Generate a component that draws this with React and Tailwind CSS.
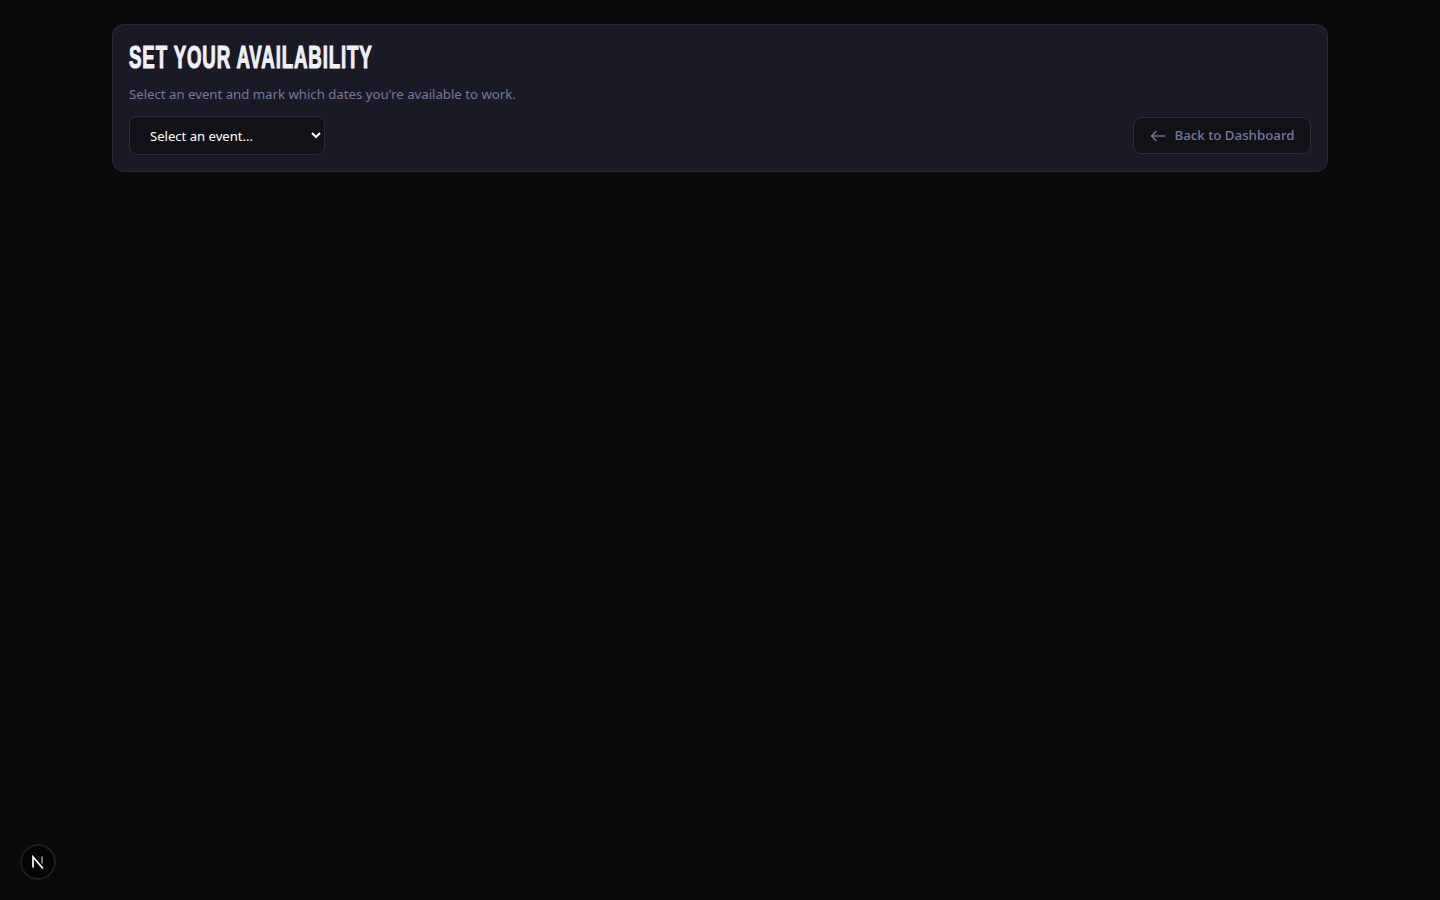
import React from "react";

const sans = "font-['Noto_Sans','Open_Sans',sans-serif]";

// Next.js dev indicator in the bottom corner
const DevBadge = () => (
  <div className="fixed left-5 bottom-5 w-9 h-9 rounded-full bg-[#050505] border-2 border-[#1e1e1e] flex items-center justify-center">
    <svg width="16" height="16" viewBox="0 0 16 16" fill="none">
      <path d="M3 13.5V3L13 14.5" stroke="#fff" strokeWidth="1.7" />
      <path d="M12 2.5V9.5" stroke="#aaa" strokeWidth="1.4" />
    </svg>
  </div>
);

const ArrowBack = () => (
  <svg width="16" height="16" viewBox="0 0 16 16" fill="none" stroke="#76768f" strokeWidth="1.4">
    <path d="M15 8H1.5" />
    <path d="M6.5 3L1.5 8L6.5 13" />
  </svg>
);

export default function App() {
  return (
    <div className={`min-h-screen bg-[#0a0a0c] ${sans}`}>
      <div className="w-[1216px] mx-auto pt-6">
        <div className="h-[148px] rounded-xl bg-[#1a1a26] border border-[#2a2a3a] px-4 pt-4 pb-4">
          <h1 className="h-[33px] font-['Liberation_Sans',sans-serif] font-bold text-[32px] leading-[33px] tracking-[1.5px] text-[#f0f0f8] uppercase whitespace-nowrap origin-left scale-x-[0.583] [-webkit-text-stroke:1.2px_#f0f0f8]">
            Set Your Availability
          </h1>
          <p className="mt-[10px] text-[13.2px] leading-5 text-[#77779b]">
            Select an event and mark which dates you're available to work.
          </p>
          <div className="mt-[12px] flex items-center justify-between">
            <select className={`w-[196px] h-[39px] pl-4 pr-1 rounded-lg bg-[#111118] border border-[#2a2a3a] text-white text-[13.1px] ${sans}`}>
              <option>Select an event...</option>
            </select>
            <button className="w-[178px] h-[37px] rounded-lg bg-[#111118] border border-[#2a2a3a] flex items-center justify-center gap-[8px] pl-[1px] text-[13.3px] font-medium text-[#77779b]">
              <ArrowBack />
              Back to Dashboard
            </button>
          </div>
        </div>
      </div>
      <DevBadge />
    </div>
  );
}
